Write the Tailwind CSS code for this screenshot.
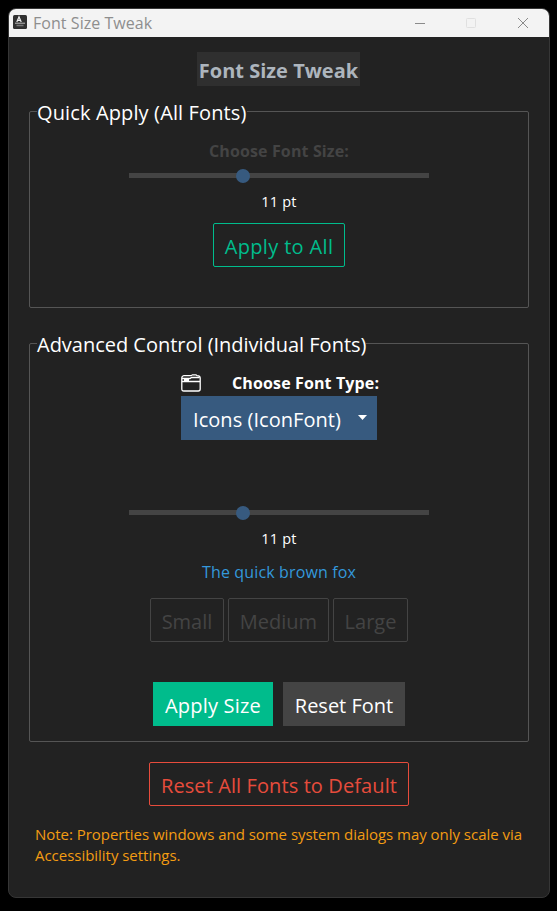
<!DOCTYPE html>
<html lang="en">
<head>
<meta charset="utf-8">
<title>Font Size Tweak</title>
<script src="https://cdn.jsdelivr.net/npm/@tailwindcss/browser@4"></script>
</head>
<body class="bg-black w-[557px] h-[911px] overflow-hidden pt-2 pl-2 font-['Open_Sans','Noto_Sans',sans-serif] text-white">
<main class="w-[542px] h-[890px] rounded-lg border border-[#363636] bg-[#222222] overflow-hidden flex flex-col">
  <header class="h-7 shrink-0 bg-[#f3f3f3] flex items-center pl-1">
    <svg class="w-[14px] h-[14px] shrink-0 -mt-0.5" viewBox="0 0 14 14">
      <rect width="14" height="14" rx="1.5" fill="#303030"/>
      <path d="M3.8 7 6 1.8 8.2 7M4.6 5.3h2.8" fill="none" stroke="#f0f0f0" stroke-width="1.2"/>
      <path d="M2 8.2h10" stroke="#bbb" stroke-width="1"/>
      <path d="M3.5 10.5h7" stroke="#777" stroke-width="1.6"/>
    </svg>
    <h1 class="ml-[6px] text-[16px] leading-7 text-[#8e8e8e] whitespace-nowrap tracking-[0.05px]">Font Size Tweak</h1>
    <svg class="ml-auto mr-[20px] w-[114px] h-[12px] -mt-0.5" viewBox="0 0 114 12" fill="none">
      <path d="M0 7.5h10" stroke="#8a8a8a"/>
      <rect x="51.5" y="2.5" width="9" height="9" rx=".8" stroke="#e0e0e0"/>
      <path d="M103 2l10 10M113 2l-10 10" stroke="#8a8a8a"/>
    </svg>
  </header>

  <h2 class="mt-[15px] ml-[188px] w-[163px] h-[34px] shrink-0 bg-[#2f2f2f] text-[#adb5bd] text-[20px] font-bold leading-[37px] text-center whitespace-nowrap">Font Size Tweak</h2>

  <section class="mt-[25px] mx-5 h-[197px] shrink-0 rounded-[2px] border border-[#555555] flex flex-col items-center">
    <h3 class="self-start ml-[7px] -mt-[13px] h-[26px] bg-[#222222] text-[20px] leading-[27px] whitespace-nowrap tracking-[0.13px]">Quick Apply (All Fonts)</h3>
    <p class="mt-[14px] h-6 text-[16px] font-bold leading-6 text-[#444444] whitespace-nowrap tracking-[0.13px]">Choose Font Size:</p>
    <div class="mt-[6px] w-[300px] h-[13px] flex items-center relative">
      <div class="w-full h-[5px] bg-[#444444]"></div>
      <div class="absolute left-[107px] top-0 size-[13.5px] rounded-full bg-[#375a7f]"></div>
    </div>
    <p class="mt-[10px] h-5 text-[14.5px] leading-5 tracking-[0.2px]">11 pt</p>
    <button class="mt-[11px] w-[132px] h-11 rounded-[2px] border border-[#00bc8c] text-[#00bc8c] text-[20px] leading-[42px] pt-[2px] whitespace-nowrap tracking-[0.35px]">Apply to All</button>
  </section>

  <section class="mt-[35px] mx-5 h-[399px] shrink-0 rounded-[2px] border border-[#555555] flex flex-col items-center">
    <h3 class="self-start ml-[7px] -mt-[13px] h-[26px] bg-[#222222] text-[20px] leading-[27px] whitespace-nowrap tracking-[-0.02px]">Advanced Control (Individual Fonts)</h3>
    <div class="mt-[14px] w-[196px] h-6 flex items-center">
      <svg class="w-5 h-[18px] shrink-0" viewBox="0 0 20 18" fill="none" stroke="#fff" stroke-width="1.3">
        <path d="M.8 3.8Q.8 2 2.8 1.7H10L11.5 .8h3.5l1 .9q3.2 0 3.2 2.3V15q0 2-2 2H2.8Q.8 17 .8 15Z"/>
        <path d="M1 4.5H9L10.5 3.5H18.5M1 7.5H19M3 6h5"/>
      </svg>
      <p class="ml-[31px] text-[16px] font-bold leading-6 whitespace-nowrap tracking-[0.13px]">Choose Font Type:</p>
    </div>
    <button class="mt-px w-[196px] h-11 bg-[#375a7f] flex items-center pl-3 pr-[10px] text-[20px]">
      <span class="leading-11 pt-[3px] whitespace-nowrap tracking-[0.05px]">Icons (IconFont)</span>
      <svg class="ml-auto mb-0.5 w-[9px] h-[5px]" viewBox="0 0 9 5"><path d="M0 0h9L4.5 5Z" fill="#fff"/></svg>
    </button>
    <div class="mt-[66px] w-[300px] h-[13px] flex items-center relative">
      <div class="w-full h-[5px] bg-[#444444]"></div>
      <div class="absolute left-[107px] top-0 size-[13.5px] rounded-full bg-[#375a7f]"></div>
    </div>
    <p class="mt-[10px] h-5 text-[14.5px] leading-5 tracking-[0.2px]">11 pt</p>
    <p class="mt-[11px] h-6 text-[16px] leading-6 text-[#3498db] whitespace-nowrap tracking-[0.14px]">The quick brown fox</p>
    <div class="mt-[14px] flex gap-1 text-[20px] leading-[42px] text-[#444444]">
      <button class="w-[74px] h-11 rounded-[2px] border border-[#444444] pt-[2px]">Small</button>
      <button class="w-[101px] h-11 rounded-[2px] border border-[#444444] pt-[2px]">Medium</button>
      <button class="w-[75px] h-11 rounded-[2px] border border-[#444444] pt-[2px]">Large</button>
    </div>
    <div class="mt-10 flex gap-[10px] text-[20px] leading-11">
      <button class="w-[120px] h-11 bg-[#00bc8c] pt-[2px] whitespace-nowrap tracking-[0.2px]">Apply Size</button>
      <button class="w-[122px] h-11 bg-[#444444] pt-[2px] whitespace-nowrap">Reset Font</button>
    </div>
  </section>

  <button class="mt-5 self-center w-[260px] h-11 shrink-0 rounded-[2px] border border-[#e74c3c] text-[#e74c3c] text-[20px] leading-[42px] pt-[2px] whitespace-nowrap tracking-[0.1px]">Reset All Fonts to Default</button>
  <p class="mt-[18px] ml-[26px] text-[15px] leading-[21px] text-[#f39c12] whitespace-nowrap tracking-[-0.03px]">Note: Properties windows and some system dialogs may only scale via<br>Accessibility settings.</p>
</main>
</body>
</html>
